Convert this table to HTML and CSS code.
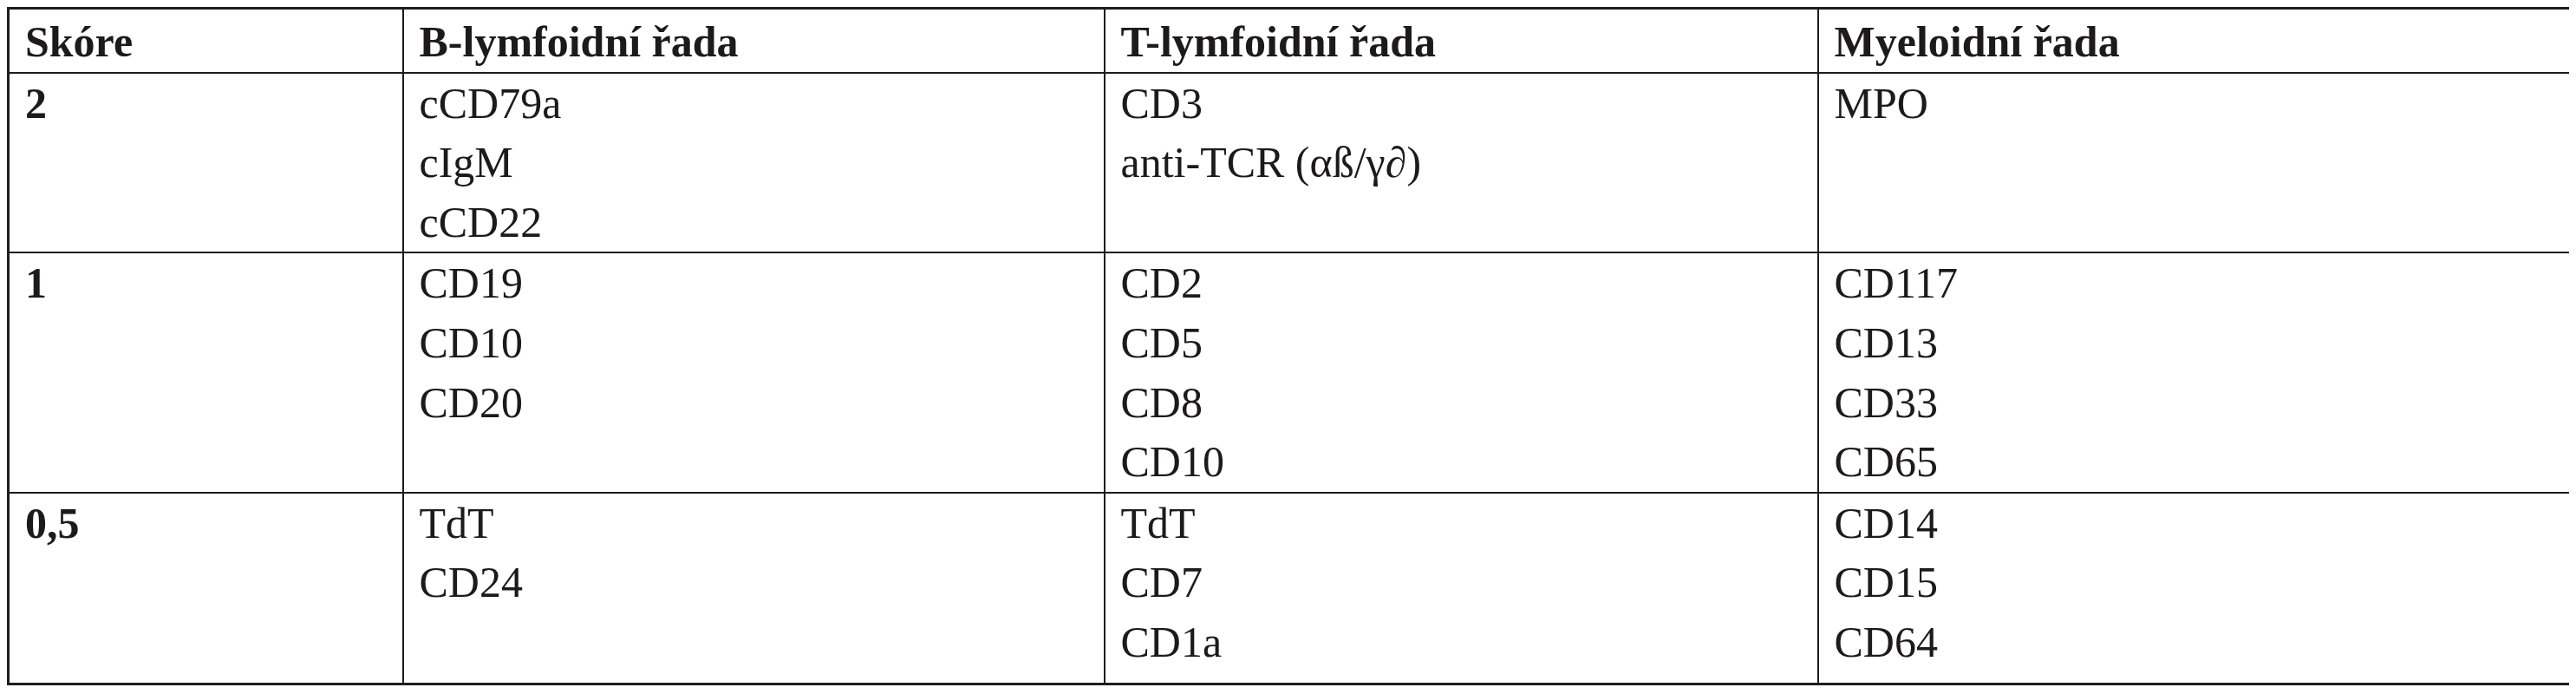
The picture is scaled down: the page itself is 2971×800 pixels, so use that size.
FILE: index.html
```html
<!DOCTYPE html>
<html lang="cs">
<head>
<meta charset="utf-8">
<title>Skóre</title>
<link rel="stylesheet" href="styles.css">
</head>
<body>
<table class="score-table">
  <colgroup>
    <col class="col-score">
    <col class="col-b">
    <col class="col-t">
    <col class="col-m">
  </colgroup>
  <thead>
    <tr class="head-row">
      <th>Skóre</th>
      <th>B-lymfoidní řada</th>
      <th>T-lymfoidní řada</th>
      <th>Myeloidní řada</th>
    </tr>
  </thead>
  <tbody>
    <tr>
      <td class="score">2</td>
      <td><div>cCD79a</div><div>cIgM</div><div>cCD22</div></td>
      <td><div>CD3</div><div>anti-TCR (αß/γ∂)</div></td>
      <td><div>MPO</div></td>
    </tr>
    <tr>
      <td class="score">1</td>
      <td><div>CD19</div><div>CD10</div><div>CD20</div></td>
      <td><div>CD2</div><div>CD5</div><div>CD8</div><div>CD10</div></td>
      <td><div>CD117</div><div>CD13</div><div>CD33</div><div>CD65</div></td>
    </tr>
    <tr class="last-row">
      <td class="score">0,5</td>
      <td><div>TdT</div><div>CD24</div></td>
      <td><div>TdT</div><div>CD7</div><div>CD1a</div></td>
      <td><div>CD14</div><div>CD15</div><div>CD64</div></td>
    </tr>
  </tbody>
</table>
</body>
</html>
```

FILE: styles.css
```css
html, body {
  background: #ffffff;
}

body {
  margin: 8px;
  font-family: "Liberation Serif", "Times New Roman", serif;
  color: #1c1a1b;
}

.score-table {
  width: 2955px;
  table-layout: fixed;
  border-collapse: collapse;
  border: 3px solid #1e1c1d;
  font-size: 50px;
  line-height: 68.6px;
}

.col-score { width: 455px; }
.col-b { width: 809px; }
.col-t { width: 823px; }
.col-m { width: 868px; }

.score-table th,
.score-table td {
  border: 2px solid #1e1c1d;
  padding: 0 18px;
  text-align: left;
  vertical-align: top;
}

.score-table th {
  font-weight: bold;
  padding-top: 3px;
}

.score-table td.score {
  font-weight: bold;
}

.last-row td {
  padding-bottom: 12px;
}
```
